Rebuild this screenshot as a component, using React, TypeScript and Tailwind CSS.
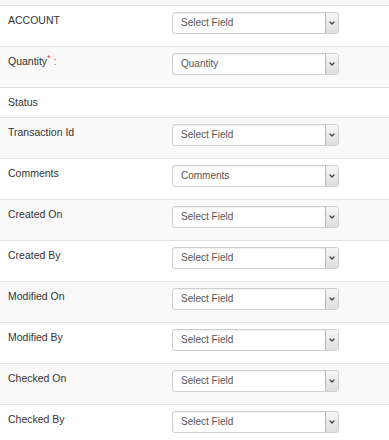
import { ChevronDown } from "lucide-react";

type Field = { label: string; value?: string; required?: boolean };

const fields: Field[] = [
  { label: "ACCOUNT", value: "Select Field" },
  { label: "Quantity", value: "Quantity", required: true },
  { label: "Status" },
  { label: "Transaction Id", value: "Select Field" },
  { label: "Comments", value: "Comments" },
  { label: "Created On", value: "Select Field" },
  { label: "Created By", value: "Select Field" },
  { label: "Modified On", value: "Select Field" },
  { label: "Modified By", value: "Select Field" },
  { label: "Checked On", value: "Select Field" },
  { label: "Checked By", value: "Select Field" },
];

function FakeSelect({ value }: { value: string }) {
  return (
    <div className="mt-[6px] flex h-[22px] w-[167px] items-stretch rounded-[3px] border border-[#cfcfcf] bg-white shadow-[inset_0_1px_1px_rgba(0,0,0,0.06)]">
      <span className="flex-1 pl-[8px] pt-[3px] text-[10px] leading-[14px] text-[#555]">{value}</span>
      <span className="flex w-[13px] items-center justify-center rounded-r-[2px] border-l border-[#b8b8b8] bg-gradient-to-b from-[#f6f6f6] to-[#dedede]">
        <ChevronDown className="h-[8px] w-[8px] text-[#444]" strokeWidth={4} />
      </span>
    </div>
  );
}

export default function App() {
  return (
    <div className="w-[389px] h-[440px] overflow-hidden bg-white font-['Liberation_Sans',Arial,sans-serif]">
      <div className="h-[5px] bg-[#f9f9f9]" />
      {fields.map((f, i) => (
        <div
          key={f.label}
          className={`flex items-start border-t border-[#e2e2e2] ${i % 2 === 1 ? "bg-[#f9f9f9]" : "bg-white"} ${f.value ? "h-[41px]" : "h-[30px]"}`}
        >
          <div className="w-[172px] shrink-0 pl-[8px] pt-[7px] text-[10.5px] leading-[14px] text-[#333]">
            {f.label}
            {f.required && (
              <>
                <sup className="text-[9px] text-[#e33]">*</sup>
                <span className="text-[#777]"> :</span>
              </>
            )}
          </div>
          {f.value && <FakeSelect value={f.value} />}
        </div>
      ))}
    </div>
  );
}
